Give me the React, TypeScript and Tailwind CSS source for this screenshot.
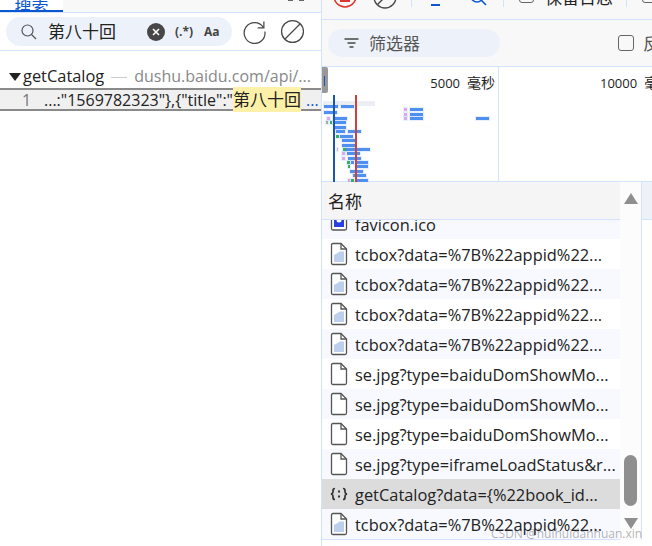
import React from 'react';

const fontStack = { fontFamily: '"Open Sans", "Noto Sans CJK SC", sans-serif' };

const blue = '#4f8fef';
const green = '#34b060';
const pink = '#d8a8f0';

const bars: [number, number, number, string][] = [
  [3, 38, 14, blue], [20, 38, 13, blue], [3, 44, 13, blue],
  [6, 50, 3, pink], [12, 50, 14, blue], [5, 54, 2, '#aaaaaa'], [9, 54, 2, green], [12, 54, 13, blue],
  [13, 59, 12, blue], [15, 63, 9, blue], [27, 63, 13, blue], [15, 68, 3, green], [19, 68, 13, blue],
  [21, 72, 13, blue], [21, 77, 13, blue], [16, 81, 1, pink], [22, 81, 3, green], [25, 81, 24, blue],
  [21, 85, 3, pink], [26, 85, 13, blue], [21, 90, 3, pink], [27, 90, 13, blue],
  [26, 94, 3, green], [30, 94, 3, blue], [35, 94, 12, blue], [27, 98, 2, green], [35, 98, 12, blue],
  [29, 103, 13, blue], [32, 107, 13, blue], [27, 112, 2, pink], [30, 112, 3, green], [35, 112, 12, blue],
  [83, 41, 3, pink], [89, 41, 13, blue], [83, 46, 3, pink], [89, 46, 13, blue], [83, 50, 3, pink], [89, 50, 13, blue],
  [155, 50, 13, blue],
  [3, 35, 13, '#eeeeee'], [17, 35, 5, '#eeeeee'], [24, 35, 14, '#eeeeee'], [40, 35, 13, '#eeeeee'],
];

const SearchIcon = ({ className }: { className: string }) => (
  <svg viewBox="0 0 18 18" fill="none" stroke="currentColor" strokeWidth="1.2" className={className}>
    <circle cx="7.5" cy="7.5" r="5.5" />
    <path d="M11.5 11.5 L16 16" />
  </svg>
);

const DocIcon = ({ image }: { image?: boolean }) => (
  <svg width="18" height="24" viewBox="0 0 18 24" className="shrink-0" fill="none">
    <path d="M1.5 3 Q1.5 1.5 3 1.5 H11 L16.5 7 V21 Q16.5 22.5 15 22.5 H3 Q1.5 22.5 1.5 21 Z" fill="#fff" stroke="#555" strokeWidth="1.3" />
    <path d="M11 1.5 V7 H16.5" stroke="#555" strokeWidth="1.3" />
    {image && <path d="M4 20 V13 L10 9.5 H14 V20 Z" fill="#bcd0ee" />}
  </svg>
);

const FavIcon = () => (
  <svg width="18" height="24" viewBox="0 0 18 24" className="shrink-0" fill="none">
    <rect x="1.5" y="0" width="15" height="18" rx="1.5" fill="#fff" stroke="#555" strokeWidth="1.3" />
    <rect x="4" y="2" width="10" height="13" fill="#2a3fe0" />
    <circle cx="9" cy="8" r="2.5" fill="#fff" />
  </svg>
);

const JsonIcon = () => (
  <svg width="18" height="18" viewBox="0 0 18 18" className="shrink-0" fill="none" stroke="#333" strokeWidth="1.7">
    <path d="M5 3.5 Q3 3.5 3 5.5 V7 Q3 8.6 1 9 Q3 9.4 3 11 V12.5 Q3 14.5 5 14.5" />
    <path d="M13 3.5 Q15 3.5 15 5.5 V7 Q15 8.6 17 9 Q15 9.4 15 11 V12.5 Q15 14.5 13 14.5" />
    <path d="M9 5.5 V7.5 M9 10.5 V12.5" strokeWidth="2" />
  </svg>
);

const Row = ({ name, kind, odd, selected }: { name: string; kind: 'doc' | 'img' | 'fav' | 'json'; odd?: boolean; selected?: boolean }) => (
  <div className={`flex h-[30px] items-center gap-[7px] pl-[8px] text-[16.4px] text-[#222] ${selected ? 'bg-[#dcdcdc]' : odd ? 'bg-[#f7f9fe]' : 'bg-white'}`}>
    {kind === 'doc' && <DocIcon />}
    {kind === 'img' && <DocIcon image />}
    {kind === 'fav' && <FavIcon />}
    {kind === 'json' && <JsonIcon />}
    <span className="mt-[2px] whitespace-nowrap">{name}</span>
  </div>
);

export default function App() {
  return (
    <div className="relative flex h-[546px] w-[652px] overflow-hidden bg-white text-[#222]" style={fontStack}>
      {/* Search panel */}
      <div className="flex w-[322px] shrink-0 flex-col border-r border-[#d3e3fd]">
        <div className="flex h-[13px] items-end justify-between overflow-hidden border-b border-[#d3e3fd] bg-[#f8f8f8]">
          <div className="flex h-[12px] w-[63px] items-end justify-center overflow-hidden border-b-2 border-[#0b57d0] bg-white">
            <span className="mb-[-8px] text-[17px] leading-[20px] text-[#0b57d0]">搜索</span>
          </div>
          <div className="mb-[11px] mr-[17px] flex gap-[6px]">
            <span className="h-px w-[5px] bg-[#666]" />
            <span className="h-px w-[5px] bg-[#666]" />
          </div>
        </div>
        <div className="flex h-[38px] items-center border-b border-[#d3e3fd] pl-[6px]">
          <div className="flex h-[29px] w-[226px] items-center rounded-full bg-[#edf2fa] pl-[14px]">
            <SearchIcon className="h-[18px] w-[18px] text-[#555]" />
            <span className="ml-[10px] w-[99px] whitespace-nowrap text-[17px] text-[#222]">第八十回</span>
            <span className="flex h-[18px] w-[18px] shrink-0 items-center justify-center rounded-full bg-[#474747]">
              <svg viewBox="0 0 10 10" className="h-[10px] w-[10px]" stroke="#fff" strokeWidth="1.6"><path d="M2 2 L8 8 M8 2 L2 8" /></svg>
            </span>
            <span className="ml-[10px] text-[12px] font-bold text-[#444]">(.*)</span>
            <span className="ml-[11px] text-[12px] font-bold text-[#444]">Aa</span>
          </div>
          <svg viewBox="0 0 24 24" fill="none" stroke="#474747" strokeWidth="1.2" className="ml-[10px] h-[25px] w-[25px]">
            <path d="M20.5 8 A10 10 0 1 0 22 12" />
            <path d="M21 2.5 V8.5 H15" />
          </svg>
          <svg viewBox="0 0 24 24" fill="none" stroke="#474747" strokeWidth="1.2" className="ml-[13px] h-[25px] w-[25px]">
            <circle cx="12" cy="12" r="10.5" />
            <path d="M4.8 19.2 L19.2 4.8" />
          </svg>
        </div>
        <div className="mt-[14px] flex h-[22px] items-center whitespace-nowrap pl-[9px] text-[16.4px]">
          <span className="mt-[2px] h-0 w-0 border-x-[6px] border-t-[8px] border-x-transparent border-t-[#222]" />
          <span className="ml-[2px]">getCatalog</span>
          <span className="ml-[7px] mt-[2px] h-px w-[16px] bg-[#ccc]" />
          <span className="ml-[7px] text-[16px] text-[#888]">dushu.baidu.com/api/...</span>
        </div>
        <div className="mt-px flex h-[23px] items-center whitespace-nowrap border-y-2 border-[#8a8a8a] bg-[#f0f0f0] pl-[22px] text-[16px]">
          <span className="w-[22px] text-[#777]">1</span>
          <span>{'...:"1569782323"},{"title":"'}</span>
          <span className="bg-[#fdf0a8] text-[17px]">第八十回</span>
          <span className="ml-[5px] text-[#0b57d0]">...</span>
        </div>
      </div>

      {/* Network panel */}
      <div className="flex min-w-0 flex-1 flex-col">
        <div className="flex h-[20px] shrink-0 items-start overflow-hidden whitespace-nowrap border-b border-[#d3e3fd] bg-[#f8f8f8]">
          <svg viewBox="0 0 24 24" fill="none" className="ml-[11px] mt-[-16px] h-[24px] w-[24px] shrink-0">
            <circle cx="12" cy="12" r="11" stroke="#dc362e" strokeWidth="1.6" />
            <path d="M7 17 H17" stroke="#dc362e" strokeWidth="2" />
          </svg>
          <svg viewBox="0 0 24 24" fill="none" stroke="#474747" strokeWidth="1.4" className="ml-[16px] mt-[-15px] h-[24px] w-[24px] shrink-0">
            <circle cx="12" cy="12" r="11" />
            <path d="M4.5 19.5 L19.5 4.5" />
          </svg>
          <span className="ml-[14px] h-[7px] w-px shrink-0 bg-[#d3e3fd]" />
          <span className="ml-[19px] mt-[4px] h-[2px] w-[9px] shrink-0 bg-[#0b57d0]" />
          <svg viewBox="0 0 18 18" fill="none" stroke="#0b57d0" strokeWidth="1.6" className="ml-[30px] mt-[-11px] h-[18px] w-[18px] shrink-0">
            <circle cx="7" cy="7" r="6" />
            <path d="M11 11 L16 16" />
          </svg>
          <span className="ml-[15px] h-[7px] w-px shrink-0 bg-[#d3e3fd]" />
          <span className="ml-[15px] mt-[-12px] h-[15px] w-[15px] shrink-0 rounded-[3px] border-[1.5px] border-[#666]" />
          <span className="ml-[11px] mt-[-12px] shrink-0 text-[17px] leading-[20px]">保留日志</span>
          <span className="ml-[13px] h-[7px] w-px shrink-0 bg-[#d3e3fd]" />
          <span className="ml-[15px] mt-[-12px] h-[15px] w-[15px] shrink-0 rounded-[3px] border-[1.5px] border-[#666]" />
        </div>

        <div className="flex h-[47px] shrink-0 items-center whitespace-nowrap border-b border-[#d3e3fd] bg-[#f8f8f8] pl-[6px]">
          <div className="flex h-[28px] w-[172px] shrink-0 items-center rounded-full bg-[#edf2fa] pl-[16px]">
            <svg viewBox="0 0 14 12" className="h-[12px] w-[15px]" stroke="#474747" strokeWidth="1.6">
              <path d="M0 2 H14 M3 6 H11 M5 10 H9" />
            </svg>
            <span className="ml-[10px] mt-[2px] text-[17px] text-[#555]">筛选器</span>
          </div>
          <span className="ml-[118px] h-[16px] w-[16px] shrink-0 rounded-[3px] border-[1.5px] border-[#666]" />
          <span className="ml-[9px] mt-[2px] text-[17px] text-[#555]">反</span>
        </div>

        {/* Overview */}
        <div className="relative flex h-[115px] shrink-0 whitespace-nowrap border-b border-[#d3e3fd] text-[13px]">
          <div className="flex h-full w-[177px] shrink-0 items-start justify-end gap-[7px] border-r border-[#d3e3fd] pt-[7px] pr-[3px]">
            <span>5000</span>
            <span className="text-[14px] leading-[18px]">毫秒</span>
          </div>
          <div className="flex flex-1 items-start gap-[7px] overflow-hidden pt-[7px] pl-[101px]">
            <span>10000</span>
            <span className="text-[14px] leading-[18px]">毫秒</span>
          </div>
          <span className="absolute left-0 top-0 h-[26px] w-[6px] rounded-r-[2px] bg-[#999]" />
          <span className="absolute left-[2px] top-[9px] h-[10px] w-px bg-[#1a56b0]" />
          {bars.map(([x, y, w, c], i) => (
            <span
              key={i}
              className="absolute h-[3px] shadow-[0_0_0_1px_#4f8fef22]"
              style={{ left: x - 1, top: y, width: w, background: c }}
            />
          ))}
          <span className="absolute left-[11px] top-[28px] h-[87px] w-[2px] bg-[#1a56b0]" />
          <span className="absolute left-[33px] top-[28px] h-[87px] w-[2px] bg-[#d23f3a]" />
        </div>

        {/* Request list */}
        <div className="flex min-h-0">
          <div className="relative flex w-[320px] shrink-0 border-r border-[#d3e3fd]">
            <div className="w-[298px] shrink-0 overflow-hidden">
              <div className="relative z-10 flex h-[38px] items-center border-b border-[#d3e3fd] bg-[#f5f5f5] pl-[6px] pt-[2px] text-[17px]">名称</div>
              <div className="mt-[-11px] border-b border-[#d3e3fd]">
                <Row name="favicon.ico" kind="fav" odd />
                <Row name={'tcbox?data=%7B%22appid%22...'} kind="img" />
                <Row name={'tcbox?data=%7B%22appid%22...'} kind="img" odd />
                <Row name={'tcbox?data=%7B%22appid%22...'} kind="img" />
                <Row name={'tcbox?data=%7B%22appid%22...'} kind="img" odd />
                <Row name="se.jpg?type=baiduDomShowMo..." kind="doc" />
                <Row name="se.jpg?type=baiduDomShowMo..." kind="doc" odd />
                <Row name="se.jpg?type=baiduDomShowMo..." kind="doc" />
                <Row name={'se.jpg?type=iframeLoadStatus&r...'} kind="doc" odd />
                <Row name={'getCatalog?data={%22book_id...'} kind="json" selected />
                <Row name={'tcbox?data=%7B%22appid%22...'} kind="img" odd />
              </div>
            </div>
            <div className="flex flex-1 flex-col items-center bg-[#fcfcfc] pt-[11px]">
              <span className="h-0 w-0 border-x-[7px] border-b-[11px] border-x-transparent border-b-[#8f8f8f]" />
              <span className="mt-[251px] h-[51px] w-[13px] rounded-full bg-[#8f8f8f]" />
              <span className="mt-[12px] h-0 w-0 border-x-[7px] border-t-[11px] border-x-transparent border-t-[#8f8f8f]" />
            </div>
          </div>
          <div className="h-[38px] flex-1 border-b border-[#d3e3fd] bg-[#edf2fa]" />
        </div>
      </div>

      <span className="absolute left-[491px] top-[525px] whitespace-nowrap text-[12px] text-[#222]/35">
        CSDN @huihuidanhuan.xin
      </span>
    </div>
  );
}
